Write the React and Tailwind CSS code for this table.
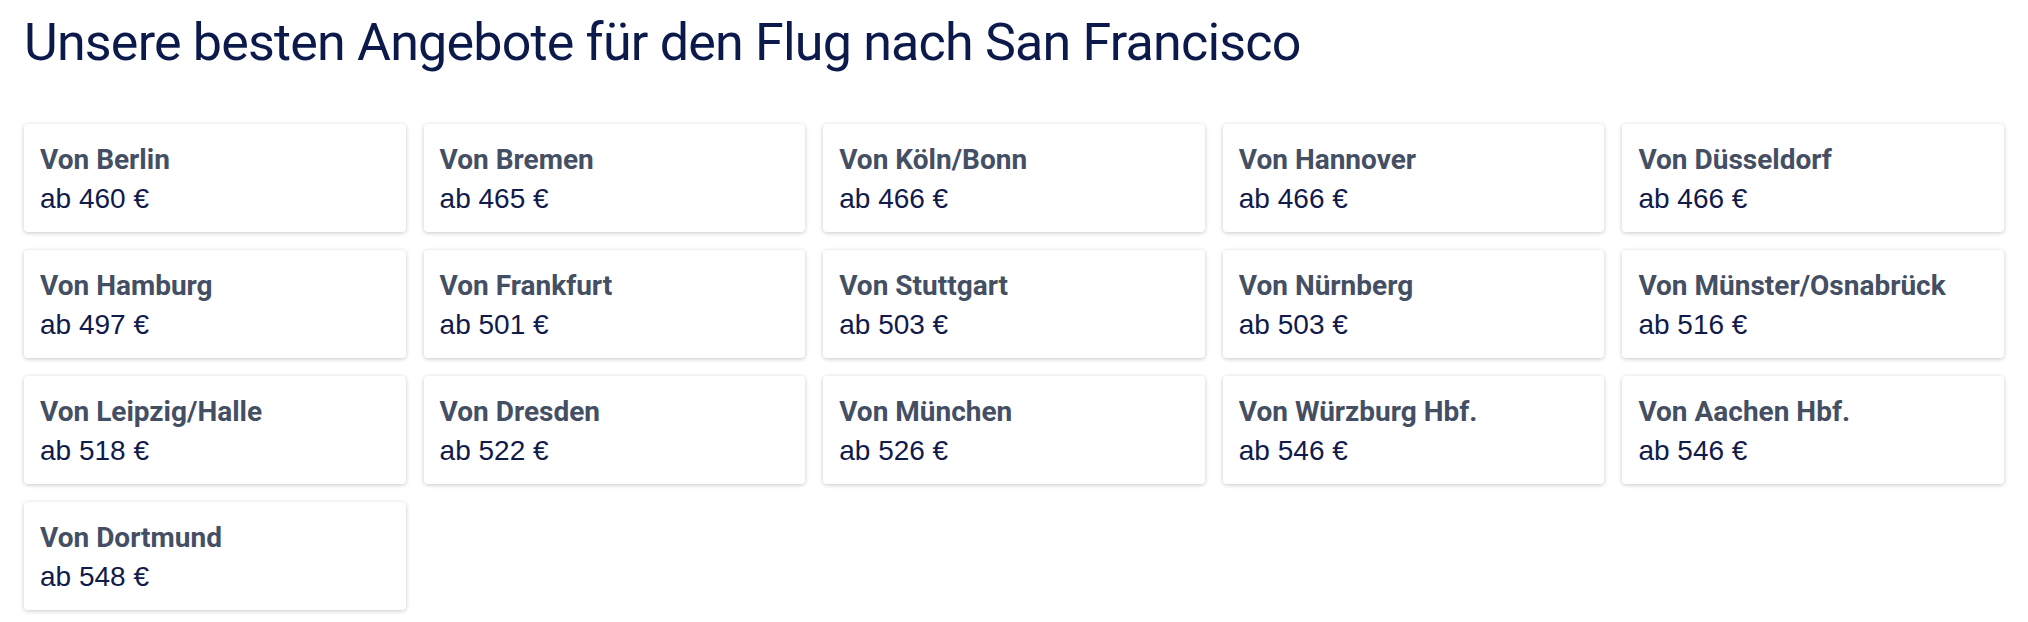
const offers = [
  { city: "Berlin", price: 460 },
  { city: "Bremen", price: 465 },
  { city: "Köln/Bonn", price: 466 },
  { city: "Hannover", price: 466 },
  { city: "Düsseldorf", price: 466 },
  { city: "Hamburg", price: 497 },
  { city: "Frankfurt", price: 501 },
  { city: "Stuttgart", price: 503 },
  { city: "Nürnberg", price: 503 },
  { city: "Münster/Osnabrück", price: 516 },
  { city: "Leipzig/Halle", price: 518 },
  { city: "Dresden", price: 522 },
  { city: "München", price: 526 },
  { city: "Würzburg Hbf.", price: 546 },
  { city: "Aachen Hbf.", price: 546 },
  { city: "Dortmund", price: 548 },
];

function OfferCard({ city, price }) {
  return (
    <a
      href="#"
      className="block h-[108px] rounded-[4px] bg-white px-4 pt-4 shadow-[0_1px_4px_rgba(0,0,0,0.22)]"
    >
      <div className="font-['Roboto',sans-serif] text-[28px] leading-[39px] font-bold text-[#444f63]">
        Von {city}
      </div>
      <div className="font-['Liberation_Sans',Arial,sans-serif] text-[28px] leading-[39px] text-[#111b4b]">
        ab {price} €
      </div>
    </a>
  );
}

export default function App() {
  return (
    <div className="min-h-[622px] bg-white px-6 pt-[17px]">
      <h2 className="font-['Roboto',Arial,sans-serif] text-[52px] leading-[52px] font-normal tracking-[-0.8px] text-[#0c1a4b]">
        Unsere besten Angebote für den Flug nach San Francisco
      </h2>

      {/* Offer grid */}
      <div className="mt-[55px] grid grid-cols-5 gap-[18px]">
        {offers.map((o) => (
          <OfferCard key={o.city} city={o.city} price={o.price} />
        ))}
      </div>
    </div>
  );
}
